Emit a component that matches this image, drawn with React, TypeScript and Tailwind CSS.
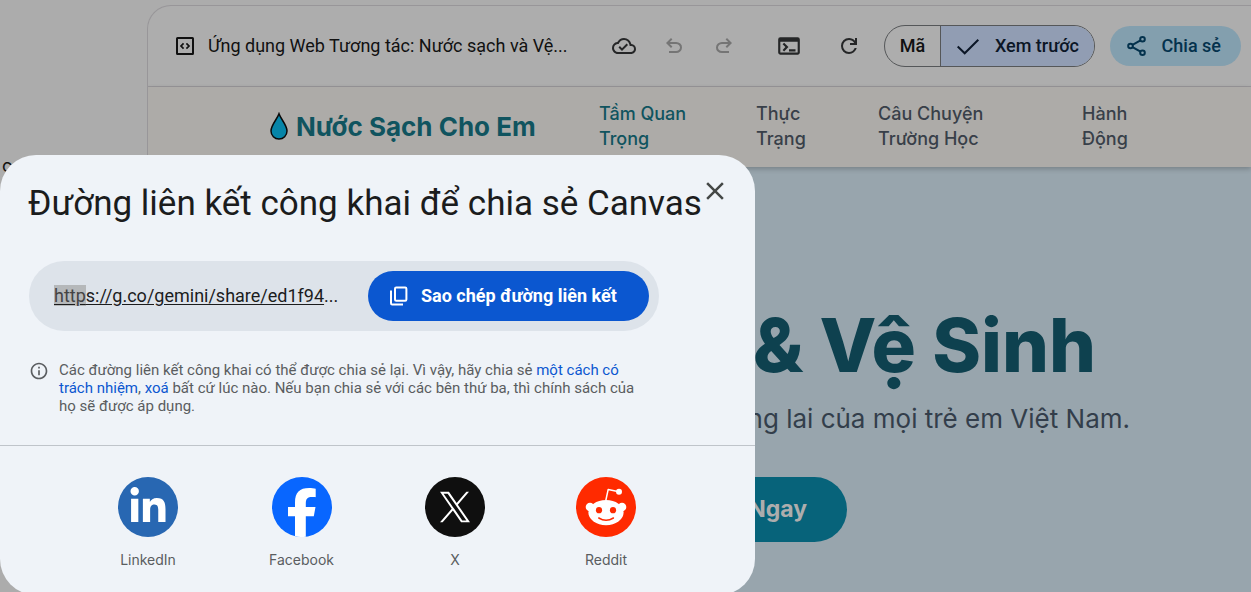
import React from "react";
import { FaLinkedinIn } from "react-icons/fa6";
import { MdOutlineCloudDone, MdOutlineTerminal, MdClose, MdInfoOutline } from "react-icons/md";

type IconProps = { className?: string };

function Symbol({ d, className }: IconProps & { d: string }) {
  return (
    <svg viewBox="0 -960 960 960" className={className} fill="currentColor" aria-hidden="true">
      <path d={d} />
    </svg>
  );
}

const UNDO =
  "M280-200v-80h284q63 0 109.5-40T720-420q0-60-46.5-100T564-560H312l104 104-56 56-200-200 200-200 56 56-104 104h252q97 0 169.5 63T800-420q0 94-72.5 157T564-200H280Z";
const REDO =
  "M396-200q-97 0-169.5-63T160-420q0-94 72.5-157T396-640h252L544-744l56-56 200 200-200 200-56-56 104-104H396q-63 0-109.5 40T240-420q0 60 46.5 100T396-280h284v80H396Z";
const REFRESH =
  "M480-160q-134 0-227-93t-93-227q0-134 93-227t227-93q69 0 132 28.5T720-690v-110h80v280H520v-80h168q-32-56-87.5-88T480-720q-100 0-170 70t-70 170q0 100 70 170t170 70q77 0 139-44t87-116h84q-28 106-114 173t-196 67Z";

function CodeBoxIcon({ className }: IconProps) {
  return (
    <svg viewBox="0 0 20 20" className={className} fill="none" stroke="currentColor" aria-hidden="true">
      <rect x="2" y="2" width="16" height="16" rx="0.5" strokeWidth="2" />
      <path d="M8.6 7.4 6 10l2.6 2.6M11.4 7.4 14 10l-2.6 2.6" strokeWidth="1.7" />
    </svg>
  );
}

function CheckIcon({ className }: IconProps) {
  return (
    <svg viewBox="0 0 24 24" className={className} fill="none" stroke="currentColor" strokeWidth="2" aria-hidden="true">
      <path d="M1.700 12.500 8.700 19.300 22.300 5.700" />
    </svg>
  );
}

function ShareIcon({ className }: IconProps) {
  return (
    <svg viewBox="0 0 22 22" className={className} fill="none" stroke="currentColor" strokeWidth="2" aria-hidden="true">
      <circle cx="16.500" cy="4.200" r="2.300" />
      <circle cx="4.500" cy="11" r="2.300" />
      <circle cx="16.500" cy="17.800" r="2.300" />
      <path d="m6.500 9.900 8-4.600M6.500 12.100l8 4.600" />
    </svg>
  );
}

function CopyIcon({ className }: IconProps) {
  return (
    <svg viewBox="0 0 20 20" className={className} fill="none" stroke="currentColor" strokeWidth="2" aria-hidden="true">
      <rect x="6" y="1.6" width="11.4" height="13.2" rx="1.2" />
      <path d="M2 4.600v12.600q0 1.200 1.200 1.200H14" />
    </svg>
  );
}

function DropIcon({ className }: IconProps) {
  return (
    <svg viewBox="0 0 18 28" className={className} aria-hidden="true">
      <path
        d="M9 1.8C7 7.500 1 13 1 19a8 8 0 0 0 16 0C17 13 11 7.500 9 1.800Z"
        fill="#0785a8"
        stroke="#0a0a0a"
        strokeWidth="1.5"
      />
    </svg>
  );
}

function FacebookLogo() {
  return (
    <svg viewBox="0 0 60 60" className="size-15" aria-hidden="true">
      <circle cx="30" cy="30" r="30" fill="#0866ff" />
      <path
        d="M23 59.200V39.200h-7V30h7v-4.500C23 15.600 27.500 11 37.200 11c1.900 0 5.100.4 6.500.8v8.400c-.7-.1-2-.1-3.500-.1-4.700 0-6.400 1.800-6.400 6.300V30h9.700l-1.700 9.200h-8v20.600a30 30 0 0 1-10.800-.6Z"
        fill="#fff"
      />
    </svg>
  );
}

function XLogo() {
  return (
    <span className="flex size-15 items-center justify-center rounded-full bg-[#0f0f0f] text-white">
      <svg viewBox="0 0 1200 1227" className="h-8 w-[30px]" fill="currentColor" aria-hidden="true">
        <path d="M714.163 519.284L1160.89 0H1055.03L667.137 450.887L357.328 0H0L468.492 681.821L0 1226.37H105.866L515.491 750.218L842.672 1226.37H1200L714.137 519.284H714.163ZM569.165 687.828L521.697 619.934L144.011 79.6944H306.615L611.412 515.685L658.88 583.579L1055.08 1150.3H892.476L569.165 687.854V687.828Z" />
      </svg>
    </span>
  );
}

function RedditLogo() {
  return (
    <svg viewBox="0 0 60 60" className="size-15" aria-hidden="true">
      <circle cx="30" cy="30" r="30" fill="#ff2a00" />
      <g fill="#fff">
        <circle cx="14" cy="30" r="4.300" />
        <circle cx="46" cy="30" r="4.300" />
        <ellipse cx="30" cy="35.600" rx="17.600" ry="12.600" />
        <circle cx="43" cy="14.700" r="3" />
      </g>
      <path d="M29.800 23.500 32.200 12.400l9.500 2" fill="none" stroke="#fff" strokeWidth="1.500" strokeLinejoin="round" />
      <g fill="#ff2a00">
        <circle cx="23" cy="33.200" r="3.100" />
        <circle cx="37" cy="33.200" r="3.100" />
      </g>
      <path d="M22.800 41q7.200 4.600 14.600 0" fill="none" stroke="#ff2a00" strokeWidth="1.500" strokeLinecap="round" />
    </svg>
  );
}

function LinkedInLogo() {
  return (
    <span className="flex size-15 items-center justify-center rounded-full bg-[#2867b2] text-white">
      <FaLinkedinIn className="size-10" />
    </span>
  );
}

const navItems = [
  { lines: ["Tầm Quan", "Trọng"], style: "w-[157px] text-[#10545f]" },
  { lines: ["Thực", "Trạng"], style: "w-[122px] text-[#383f49]" },
  { lines: ["Câu Chuyện", "Trường Học"], style: "w-[204px] text-[#383f49]" },
  { lines: ["Hành", "Động"], style: "text-[#383f49]" },
];

const socials = [
  { name: "LinkedIn", logo: <LinkedInLogo /> },
  { name: "Facebook", logo: <FacebookLogo /> },
  { name: "X", logo: <XLogo /> },
  { name: "Reddit", logo: <RedditLogo /> },
];

function Toolbar() {
  return (
    <header className="flex h-[81px] shrink-0 items-center border-b border-[#989699] pr-2.5 pl-[27px] font-['Roboto',sans-serif] text-[#111]">
      <CodeBoxIcon className="size-5 shrink-0" />
      <h1 className="ml-[13px] w-[384px] shrink-0 text-lg whitespace-nowrap">
        Ứng dụng Web Tương tác: Nước sạch và Vệ...
      </h1>
      <div className="ml-5 flex shrink-0 items-center text-[#252627]">
        <MdOutlineCloudDone className="size-6" />
        <button type="button" aria-label="Hoàn tác" className="ml-[26px] text-[#757575]">
          <Symbol d={UNDO} className="size-6" />
        </button>
        <button type="button" aria-label="Làm lại" className="ml-[26px] text-[#757575]">
          <Symbol d={REDO} className="size-6" />
        </button>
        <button type="button" aria-label="Bảng điều khiển" className="ml-10">
          <MdOutlineTerminal className="size-[26px]" />
        </button>
        <button type="button" aria-label="Tải lại" className="ml-[35px]">
          <Symbol d={REFRESH} className="size-6" />
        </button>
      </div>
      <div className="ml-auto flex h-[42px] shrink-0 overflow-hidden rounded-full border border-[#555759] text-lg font-medium">
        <button type="button" className="w-14 border-r border-[#555759]">Mã</button>
        <button
          type="button"
          className="flex w-[153px] items-center justify-between bg-[#919db3] pr-[15px] pl-[15px] text-[#0b1626]"
        >
          <CheckIcon className="size-6" />
          Xem trước
        </button>
      </div>
      <button
        type="button"
        className="ml-[15px] flex h-10 w-[131px] shrink-0 items-center justify-between rounded-full bg-[#839fae] pr-5 pl-4 text-lg font-medium text-[#04324d]"
      >
        <ShareIcon className="size-[22px]" />
        Chia sẻ
      </button>
    </header>
  );
}

function SitePreview() {
  return (
    <>
      <nav className="z-10 flex h-20 shrink-0 items-center bg-[#adaba8] pb-0.5 pl-[122px] shadow-[0_2px_5px_rgba(0,0,0,0.22)]">
        <a href="#home" className="flex w-[329px] items-center gap-2 text-[26px] font-bold text-[#10545f]">
          <DropIcon className="h-7 w-[18px]" />
          Nước Sạch Cho Em
        </a>
        {navItems.map((item) => (
          <a key={item.lines[0]} href="#section" className={`text-lg/[25px] font-medium ${item.style}`}>
            {item.lines[0]}
            <br />
            {item.lines[1]}
          </a>
        ))}
      </nav>
      <main className="flex grow flex-col items-end bg-[#98a5ad] pt-[130px] pr-[121px]">
        <h2 className="pr-[34px] text-[74px]/[96px] font-extrabold text-[#0e414f]">&amp; Vệ Sinh</h2>
        <p className="mt-2 text-[26px]/9 text-[#333e4b]">ng lai của mọi trẻ em Việt Nam.</p>
        <button
          type="button"
          className="mt-10 mr-[283px] h-[65px] rounded-full bg-[#07637a] px-10 text-[23px] font-bold text-[#adadad]"
        >
          Ngay
        </button>
      </main>
    </>
  );
}

function ShareDialog() {
  return (
    <section
      role="dialog"
      aria-labelledby="share-title"
      className="absolute top-[155px] left-0 z-20 w-[755px] rounded-[36px] bg-[#eff3f8] pb-6 font-['Roboto',sans-serif]"
    >
      <div className="flex items-start pt-6 pl-7">
        <h2 id="share-title" className="text-[35px]/[50px] whitespace-nowrap text-[#1b1c1d]">
          Đường liên kết công khai để chia sẻ Canvas
        </h2>
        <button type="button" aria-label="Đóng" className="absolute top-[21px] right-[25px] text-[#444746]">
          <MdClose className="size-[30px]" />
        </button>
      </div>
      <div className="mt-8 ml-[29px] flex h-[70px] w-[630px] items-center justify-between rounded-full bg-[#dde3ea] pr-2.5 pl-[25px]">
        <a href="#share" className="text-lg text-[#1b1c1d]">
          <span className="underline underline-offset-2">
            <span className="bg-[#b5b8ba] text-[#444]">http</span>s://g.co/gemini/share/ed1f94
          </span>
          ...
        </a>
        <button
          type="button"
          className="flex h-[50px] w-[281px] items-center gap-3 rounded-full bg-[#0b57d0] pl-[21px] text-lg font-bold whitespace-nowrap text-white"
        >
          <CopyIcon className="size-5" />
          Sao chép đường liên kết
        </button>
      </div>
      <div className="mt-[30px] ml-[29px] flex w-[630px] gap-2.5 text-[#5a5d60]">
        <MdInfoOutline className="size-5 shrink-0" />
        <p className="text-[15px]/[18px] whitespace-nowrap">
          Các đường liên kết công khai có thể được chia sẻ lại. Vì vậy, hãy chia sẻ{" "}
          <a href="#responsible" className="text-[#0b57d0]">
            một cách có
            <br />
            trách nhiệm
          </a>
          ,{" "}
          <a href="#delete" className="text-[#0b57d0]">
            xoá
          </a>{" "}
          bất cứ lúc nào. Nếu bạn chia sẻ với các bên thứ ba, thì chính sách của
          <br />
          họ sẽ được áp dụng.
        </p>
      </div>
      <hr className="mt-[30px] border-[#bfc4ca]" />
      <ul className="mt-[31px] ml-[118px] flex gap-[91px] font-['Inter',sans-serif]">
        {socials.map((s) => (
          <li key={s.name}>
            <a href="#social" className="flex flex-col items-center gap-3 text-sm/[22px] text-[#5a5d60]">
              {s.logo}
              {s.name}
            </a>
          </li>
        ))}
      </ul>
    </section>
  );
}

export default function App() {
  return (
    <div className="relative flex min-h-screen overflow-hidden bg-[#acacac] font-['Inter',sans-serif]">
      <aside className="w-[147px] shrink-0 pt-[155px] pl-0.5 text-lg/[22px] text-[#111]">c</aside>
      <div className="mt-[5px] flex grow flex-col overflow-hidden rounded-tl-[24px] border-t border-l border-[#989699] bg-[#adadad]">
        <Toolbar />
        <SitePreview />
      </div>
      <ShareDialog />
    </div>
  );
}
